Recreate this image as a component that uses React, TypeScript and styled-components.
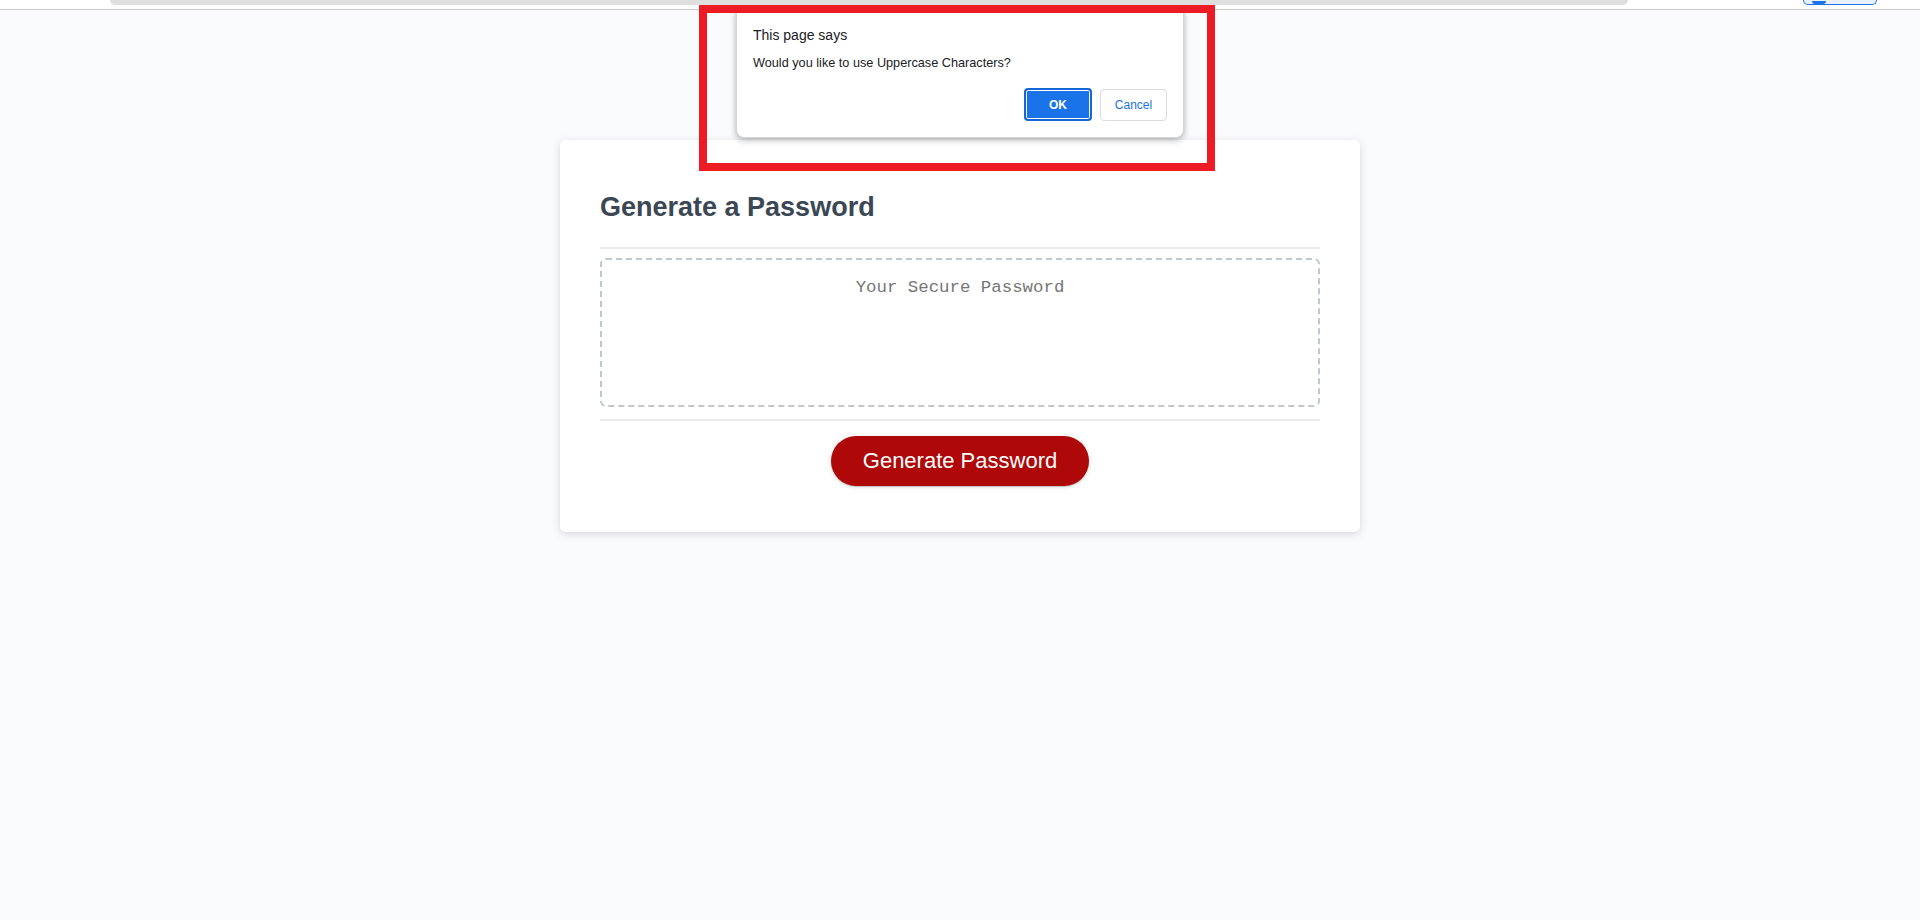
import React from "react";
import styled, { createGlobalStyle } from "styled-components";

const GlobalStyle = createGlobalStyle`
  html, body {
    margin: 0;
    padding: 0;
    background: #f9fbfd;
    font-family: "Liberation Sans", Arial, sans-serif;
  }
  * { box-sizing: border-box; }
`;

const Page = styled.div`
  position: relative;
  min-height: 920px;
`;

const ChromeBar = styled.div`
  height: 10px;
  background: #ffffff;
  border-bottom: 1px solid #c9c9c9;
  display: flex;
  align-items: flex-start;
  padding-left: 110px;
  padding-right: 43px;
`;

const AddressEdge = styled.div`
  width: 1518px;
  height: 5px;
  background: #dfdfdf;
  border-radius: 0 0 6px 6px;
`;

const ProfilePill = styled.div`
  margin-left: auto;
  width: 74px;
  height: 5px;
  border: 1px solid #1a73e8;
  border-top: none;
  border-radius: 0 0 8px 8px;
  background: #e8f0fe;
  display: flex;
  align-items: flex-end;
  padding-left: 8px;
`;

const PillDot = styled.span`
  width: 14px;
  height: 3px;
  background: #1a73e8;
  border-radius: 0 0 6px 6px;
`;

const Wrapper = styled.main`
  padding-top: 130px;
  padding-left: 20px;
  padding-right: 20px;
`;

const Card = styled.section`
  background: #ffffff;
  border-radius: 6px;
  box-shadow: rgba(0, 0, 0, 0.15) 0px 2px 8px 0px;
  color: #3b4754;
  max-width: 800px;
  margin: 0 auto;
  padding: 30px 40px;
`;

const CardHeader = styled.header`
  &::after {
    content: "";
    display: block;
    width: 100%;
    height: 2px;
    background: #e7e9eb;
  }
`;

const Title = styled.h2`
  font-family: "Liberation Sans", Arial, sans-serif;
  font-size: 27px;
  line-height: 30px;
  font-weight: 700;
  margin: 22px 0 25px;
`;

const CardBody = styled.div`
  padding: 9px 0 12px;
`;

const PasswordBox = styled.textarea`
  appearance: none;
  display: block;
  width: 100%;
  height: 149px;
  margin: 0;
  padding: 17px 15px 0;
  border: 2px dashed #c0c7cf;
  border-radius: 6px;
  resize: none;
  overflow: hidden;
  text-align: center;
  font-family: "Liberation Mono", "DejaVu Sans Mono", monospace;
  font-size: 17.4px;
  line-height: 22px;
  color: #333;
  background: #fff;
  outline: none;

  &::placeholder {
    color: #767676;
  }
`;

const CardFooter = styled.footer`
  text-align: center;
  &::before {
    content: "";
    display: block;
    width: 100%;
    height: 2px;
    background: #e7e9eb;
  }
`;

const GenerateButton = styled.button`
  border: none;
  background-color: #af0808;
  border-radius: 25px;
  box-shadow: rgba(0, 0, 0, 0.1) 0px 1px 6px 0px, rgba(0, 0, 0, 0.2) 0px 1px 1px 0px;
  color: #ffffff;
  display: inline-block;
  font-family: "Liberation Sans", Arial, sans-serif;
  font-size: 22px;
  line-height: 22px;
  margin: 15px 0 16px;
  padding: 14px 32px;
  cursor: pointer;
`;

/* Overlays: native alert dialog + red annotation frame */

const Dialog = styled.div`
  position: absolute;
  left: 736px;
  top: 10px;
  width: 448px;
  height: 128px;
  background: #ffffff;
  border: 1px solid #d5d5d5;
  border-top: none;
  border-radius: 0 0 8px 8px;
  box-shadow: 0 2px 6px rgba(0, 0, 0, 0.3);
  padding: 17px 16px 16px;
  display: flex;
  flex-direction: column;
  font-family: "Liberation Sans", Arial, sans-serif;
  color: #202124;
`;

const DialogTitle = styled.div`
  font-size: 14px;
  line-height: 16px;
`;

const DialogMessage = styled.div`
  margin-top: 13px;
  font-size: 12.7px;
  line-height: 15px;
`;

const DialogActions = styled.div`
  margin-top: auto;
  display: flex;
  justify-content: flex-end;
  align-items: center;
  gap: 8px;
`;

const DialogButton = styled.button<{ $primary?: boolean }>`
  height: ${(p) => (p.$primary ? "33px" : "32px")};
  width: ${(p) => (p.$primary ? "68px" : "67px")};
  border-radius: 4px;
  font-family: "Liberation Sans", Arial, sans-serif;
  font-size: 12px;
  font-weight: ${(p) => (p.$primary ? 700 : 400)};
  cursor: pointer;
  padding: 0;
  color: ${(p) => (p.$primary ? "#ffffff" : "#1a73e8")};
  background: ${(p) => (p.$primary ? "#1a73e8" : "#ffffff")};
  border: ${(p) => (p.$primary ? "2px solid #1667d6" : "1px solid #dadce0")};
  box-shadow: ${(p) => (p.$primary ? "inset 0 0 0 1px #ffffff" : "none")};
`;

const Annotation = styled.div`
  position: absolute;
  left: 699px;
  top: 5px;
  width: 516px;
  height: 166px;
  border: 8px solid #ed1c24;
  pointer-events: none;
`;

export default function App() {
  return (
    <>
      <GlobalStyle />
      <Page>
        <ChromeBar>
          <AddressEdge />
          <ProfilePill>
            <PillDot />
          </ProfilePill>
        </ChromeBar>
        <Wrapper>
          <Card>
            <CardHeader>
              <Title>Generate a Password</Title>
            </CardHeader>
            <CardBody>
              <PasswordBox
                readOnly
                placeholder="Your Secure Password"
                aria-label="Generated Password"
              />
            </CardBody>
            <CardFooter>
              <GenerateButton>Generate Password</GenerateButton>
            </CardFooter>
          </Card>
        </Wrapper>
        <Dialog role="alertdialog">
          <DialogTitle>This page says</DialogTitle>
          <DialogMessage>Would you like to use Uppercase Characters?</DialogMessage>
          <DialogActions>
            <DialogButton $primary>OK</DialogButton>
            <DialogButton>Cancel</DialogButton>
          </DialogActions>
        </Dialog>
        <Annotation />
      </Page>
    </>
  );
}
